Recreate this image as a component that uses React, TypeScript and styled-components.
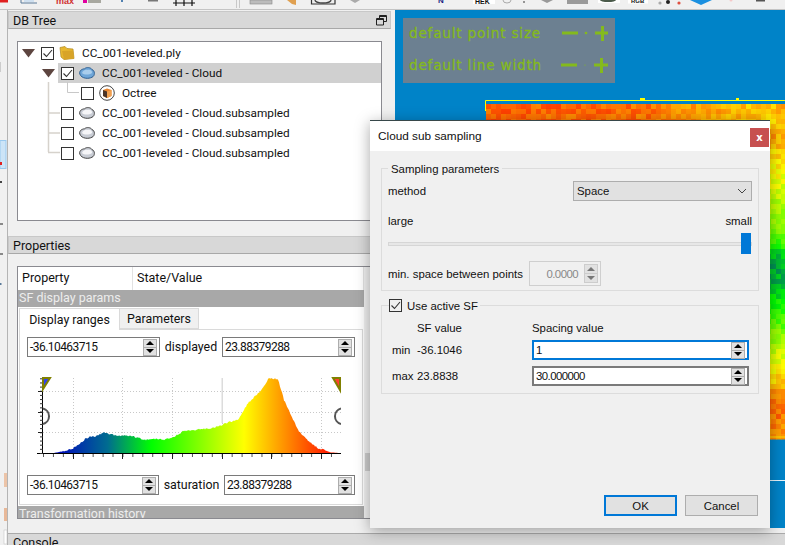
import React from "react";
import styled, { createGlobalStyle } from "styled-components";

const Global = createGlobalStyle`
  html, body { margin: 0; padding: 0; background: #f0f0f0; }
  #root { width: 785px; height: 545px; }
  * { box-sizing: border-box; }
`;

const Win = styled.div`
  position: relative; width: 785px; height: 545px; overflow: hidden;
  display: flex; flex-direction: column; background: #f0f0f0;
  font-family: Roboto, "Liberation Sans", sans-serif; font-size: 12px; color: #111;
`;
const TopBar = styled.div`height: 10px; flex: none; border-bottom: 1px solid #c4c4c4; overflow: hidden; background: #f0f0f0;`;
const Workspace = styled.div`flex: 1; display: flex; min-height: 0;`;
const LeftBar = styled.div`width: 8px; flex: none; border-right: 1px solid #b4b4b4; overflow: hidden;`;
const Stage = styled.div`flex: 1; display: flex; flex-direction: column; min-width: 0;`;
const UpperRow = styled.div`height: 518px; flex: none; display: flex;`;
const Side = styled.div`width: 387px; flex: none; display: flex; flex-direction: column;`;
const DockTitle = styled.div`
  height: 18px; flex: none; width: 383px; background: #d8d8d8; border: 1px solid #c8c8c8; border-bottom-color: #a8a8a8;
  display: flex; align-items: center; justify-content: space-between; padding: 0 3px 0 4px; font-size: 12.5px;
`;
const FirstDock = styled(DockTitle)`margin-top: 1px;`;
const PropsDock = styled(DockTitle)`margin-top: 15px;`;
const Tree = styled.div`
  position: relative; width: 365px; height: 180px; margin: 12px 0 0 9px; background: #fff;
  border: 1px solid #8a8a90; padding-top: 1px; flex: none;
`;
const Lines = styled.svg`position: absolute; left: 0; top: 0; pointer-events: none;`;
const TreeRowWrap = styled.div`display: flex; height: 20px;`;
const Branch = styled.div<{ $depth: number }>`
  width: ${p => 20 + p.$depth * 20}px; flex: none; display: flex; align-items: center;
  padding-left: ${p => 4 + p.$depth * 20}px;
`;
const Cell = styled.div<{ $sel?: boolean }>`
  flex: 1; display: flex; align-items: center; padding-left: 3px; background: ${p => (p.$sel ? "#d0d0d0" : "transparent")};
`;
const Check = styled.span`
  width: 13px; height: 13px; flex: none; border: 1px solid #333; background: #fff; display: inline-flex; align-items: center; justify-content: center;
`;
const CheckD = styled(Check)`background: transparent;`;
const NodeIcon = styled.svg`margin: 0 7px 0 5px; flex: none;`;
const NodeText = styled.span`white-space: nowrap; font-size: 11.8px; line-height: 18px;`;

const PropsBox = styled.div`
  width: 365px; height: 253px; margin: 12px 0 0 9px; flex: none; display: flex; background: #fff;
  border: 1px solid #8a8a90; overflow: hidden;
`;
const PropsInner = styled.div`width: 346px; flex: none; display: flex; flex-direction: column; overflow: hidden;`;
const PropsScroll = styled.div`flex: 1; background: #f0f0f0; position: relative;`;
const Thumb = styled.div`position: absolute; left: 1px; right: 0; top: 186px; height: 18px; background: #cdcdcd;`;
const PropsHead = styled.div`height: 23px; flex: none; display: flex; background: #fff; font-size: 12.5px;`;
const HeadCell = styled.div<{ $w: number }>`
  width: ${p => p.$w}px; flex: none; padding: 2px 0 0 4px; border-right: 1px solid #e2e2e2; line-height: 18px;
`;
const Band = styled.div`
  height: 17px; flex: none; background: #a8a8a8; color: #ededed; font-size: 12.5px; line-height: 16px; padding-left: 1px; white-space: nowrap; overflow: hidden;
`;
const LastBand = styled(Band)`height: 12px; line-height: 16px; margin-top: 1px;`;
const Tabs = styled.div`display: flex; height: 22px; flex: none; background: #fff; align-items: flex-end; padding-left: 1px;`;
const Tab = styled.div<{ $on?: boolean }>`
  height: ${p => (p.$on ? 22 : 21)}px; width: ${p => (p.$on ? 101 : 79)}px; margin-bottom: ${p => (p.$on ? -1 : 0)}px; z-index: ${p => (p.$on ? 1 : 0)};
  background: ${p => (p.$on ? "#fff" : "#f0f0f0")}; border: 1px solid #dadada; border-bottom: ${p => (p.$on ? "none" : "1px solid #dadada")};
  border-left-width: ${p => (p.$on ? 1 : 0)}px; display: flex; align-items: center; justify-content: center; font-size: 12.4px;
`;
const Pane = styled.div`
  height: 176px; flex: none; margin-left: 1px; width: 344px; background: #fff; border: 1px solid #dadada;
  padding: 7px 7px 9px; display: flex; flex-direction: column;
`;
const RangeRow = styled.div`display: flex; align-items: center; justify-content: space-between; height: 20px; flex: none;`;
const RangeLabel = styled.span`font-size: 12.4px; white-space: nowrap; padding-bottom: 1px;`;
const Hist = styled.svg`display: block; margin: 16px 0 12px 6px; flex: none;`;

const SpinBox = styled.div<{ $w: number; $h?: number; $c?: string; $bw?: number; $off?: boolean }>`
  width: ${p => p.$w}px; height: ${p => p.$h || 20}px; flex: none; display: flex; align-items: center; justify-content: space-between;
  border: ${p => p.$bw || 1}px solid ${p => p.$c || "#7a7a7a"}; background: ${p => (p.$off ? "transparent" : "#fff")};
  padding: 0 2px; color: ${p => (p.$off ? "#888" : "#111")};
`;
const SpinText = styled.span<{ $right?: boolean }>`
  flex: 1; text-align: ${p => (p.$right ? "right" : "left")}; padding-right: ${p => (p.$right ? 6 : 0)}px; white-space: nowrap; letter-spacing: -.55px;
`;
const SpinBtns = styled.div`width: 14px; flex: none; display: flex; flex-direction: column;`;
const SpinBtn = styled.div<{ $off?: boolean; $h: number }>`
  height: ${p => p.$h}px; background: #e1e1e1; border: 1px solid ${p => (p.$off ? "#ccc" : "#adadad")}; display: flex; align-items: center; justify-content: center;
  & + & { margin-top: -1px; }
`;

const Viewport = styled.div`flex: 1; position: relative; background: #0083c8; overflow: hidden;`;
const CloudArt = styled.svg`position: absolute; left: 0; top: 0;`;
const Overlay = styled.div`
  position: absolute; left: 8px; top: 8px; width: 212px; height: 65px; background: #6c8091; padding: 0 0 0 6px;
  display: flex; flex-direction: column; color: #84ba1c;
  font-family: "DejaVu Sans", sans-serif; font-size: 13.5px; letter-spacing: .85px; -webkit-text-stroke: .3px #84ba1c;
`;
const OverlayRow = styled.div`height: 32px; display: flex; align-items: center; white-space: nowrap; position: relative; top: -1px;`;
const OverlayText = styled.span`width: 149px; flex: none;`;

const Dialog = styled.div`
  position: absolute; left: 370px; top: 120px; width: 400px; height: 408px; background: #f0f0f0; display: flex; flex-direction: column;
  border-top: 1px solid #37474a; box-shadow: 0 3px 14px rgba(0, 0, 0, .35);
  font-family: "Liberation Sans", Arial, sans-serif; font-size: 11.4px; color: #111;
`;
const DlgTitle = styled.div`height: 30px; flex: none; background: #fff; display: flex; align-items: center; justify-content: space-between; padding: 0 1px 0 8px; font-size: 11.8px;`;
const CloseBtn = styled.div`
  width: 19px; height: 19px; background: #c75050; color: #fff; display: flex; align-items: center; justify-content: center;
  font-family: "DejaVu Sans", sans-serif; font-weight: 700; font-size: 10px; margin-top: 2px;
`;
const Group = styled.div`position: relative; width: 378px; margin-left: 11px; border: 1px solid #dcdcdc; flex: none;`;
const Group1 = styled(Group)`margin-top: 17px; padding: 12px 6px 4px;`;
const Group2 = styled(Group)`
  margin-top: 14px; padding: 14px 0 7px 10px; display: grid; grid-template-columns: 25px 115px 217px; row-gap: 6px; align-items: center;
`;
const ColHead = styled.span`height: 14px; line-height: 16px;`;
const Legend = styled.div`position: absolute; left: 6px; top: -8px; height: 15px; background: #f0f0f0; padding: 0 3px; display: flex; align-items: center; gap: 5px; white-space: nowrap;`;
const LegendChk = styled(Legend)`left: 7px; padding: 0 2px 0 0;`;
const FormRow = styled.div`display: flex; align-items: center; justify-content: space-between;`;
const ComboRow = styled(FormRow)`height: 20px;`;
const Combo = styled.div`
  width: 179px; height: 20px; background: #e1e1e1; border: 1px solid #adadad; display: flex; align-items: center; justify-content: space-between; padding: 0 4px 0 3px;
`;
const EndsRow = styled(FormRow)`height: 14px; margin-top: 13px;`;
const Slider = styled.div`position: relative; height: 21px; margin-top: 5px; display: flex; align-items: center;`;
const Track = styled.div`width: 100%; height: 4px; background: #e7e7e7; border: 1px solid #d6d6d6;`;
const Knob = styled.div`position: absolute; right: 1px; top: 0; width: 10px; height: 21px; background: #0078d7;`;
const MinRow = styled.div`display: flex; align-items: center; height: 25px; margin-top: 7px; gap: 7px;`;
const MinLabel = styled.span`width: 134px; flex: none; white-space: nowrap;`;
const Footer = styled.div`margin-top: auto; padding: 0 12px 12px 0; display: flex; justify-content: flex-end; gap: 8px;`;
const Btn = styled.div<{ $def?: boolean }>`
  width: 73px; height: 21px; background: #e1e1e1; border: ${p => (p.$def ? "2px solid #0078d7" : "1px solid #adadad")};
  display: flex; align-items: center; justify-content: center;
`;
const ConsoleTitle = styled.div`
  margin-top: 5px; flex: 1; background: #d8d8d8; border-top: 1px solid #aaa; padding: 0 0 0 5px; font-size: 12.5px; line-height: 18px; overflow: hidden;
`;

const Tick = () => (
  <svg width="11" height="11" viewBox="0 0 11 11"><path d="M1.5 5.5 L4.5 8.5 L10 2" fill="none" stroke="#333" strokeWidth="1.1" /></svg>
);
const Tri = () => (
  <svg width="14" height="9" viewBox="0 0 14 9"><path d="M0 0 H13 L6.5 8.5Z" fill="#5d4540" /></svg>
);
const FolderIcon = () => (
  <NodeIcon width="16" height="14" viewBox="0 0 16 14">
    <path d="M1 1.5 L6 .5 L8 2.5 L14 3 L15 12.5 L5 13.5 L2 11Z" fill="#e8b830" stroke="#b08820" strokeWidth=".7" />
    <path d="M3 5 L14 4.5 L15 12.5 L5 13.5Z" fill="#d8a428" />
  </NodeIcon>
);
const CloudIcon = ({ on }: { on?: boolean }) => (
  <NodeIcon width="16" height="12" viewBox="0 0 16 12">
    <path d="M.8 7 C0 3.5 3 2 5.5 1.8 C7.5 -.2 12 .4 13 2.6 C16.2 3.6 16.2 9 13 10.2 C10 12 2.5 12 .8 7Z" fill={on ? "#6fa6d8" : "#c8ccd4"} stroke={on ? "#2f5f90" : "#444"} strokeWidth="1" />
    <path d="M3 6 C4 3 7 2.5 8.5 3 C11 2 13.5 4 13 6 C10 8 5 8 3 6Z" fill={on ? "#a9cdec" : "#f6f6f8"} />
  </NodeIcon>
);
const OctIcon = () => (
  <NodeIcon width="16" height="16" viewBox="0 0 16 16">
    <circle cx="8" cy="8" r="7.3" fill="#fff" stroke="#444" strokeWidth="1" />
    <path d="M4 5 L8 3.5 L12.5 5 V11 L8 13 L4 11Z" fill="#e8842c" />
    <path d="M4 5 L8 6.5 V13 L4 11Z" fill="#4a3428" />
    <path d="M8 6.5 L12.5 5 V11 L8 13Z" fill="#f0a050" />
  </NodeIcon>
);

const TreeRow = ({ depth, tri, checked, sel, icon, label }: { depth: number; tri?: boolean; checked?: boolean; sel?: boolean; icon: React.ReactNode; label: string }) => (
  <TreeRowWrap>
    <Branch $depth={depth}>{tri && <Tri />}</Branch>
    <Cell $sel={sel}>
      <Check>{checked && <Tick />}</Check>
      {icon}
      <NodeText>{label}</NodeText>
    </Cell>
  </TreeRowWrap>
);

const Spin = ({ w, h, text, c, bw, off, right }: { w: number; h?: number; text: string; c?: string; bw?: number; off?: boolean; right?: boolean }) => {
  const bh = off ? 10 : 9;
  const col = off ? "#777" : "#000";
  return (
    <SpinBox $w={w} $h={h} $c={c} $bw={bw} $off={off}>
      <SpinText $right={right}>{text}</SpinText>
      <SpinBtns>
        <SpinBtn $h={bh} $off={off}><svg width="8" height="4"><path d="M0 4H8L4 0Z" fill={col} /></svg></SpinBtn>
        <SpinBtn $h={bh} $off={off}><svg width="8" height="4"><path d="M0 0H8L4 4Z" fill={col} /></svg></SpinBtn>
      </SpinBtns>
    </SpinBox>
  );
};

const lerpStops = (v: number) => {
  const s: [number, number, number, number][] = [
    [0, 0, 0, 200], [0.25, 0, 128, 96], [0.4, 0, 255, 0], [0.7, 255, 255, 0], [1, 255, 0, 0],
  ];
  const t = Math.max(0, Math.min(1, v));
  for (let i = 1; i < s.length; i++) {
    if (t <= s[i][0]) {
      const a = s[i - 1], b = s[i], f = (t - a[0]) / (b[0] - a[0]);
      return `rgb(${Math.round(a[1] + (b[1] - a[1]) * f)},${Math.round(a[2] + (b[2] - a[2]) * f)},${Math.round(a[3] + (b[3] - a[3]) * f)})`;
    }
  }
  return "#f00";
};
const rnd = (n: number) => { const x = Math.sin(n * 127.1 + 311.7) * 43758.5453; return x - Math.floor(x); };
const interp = (pts: number[][], x: number) => {
  if (x <= pts[0][0]) return pts[0][1];
  for (let i = 1; i < pts.length; i++) {
    if (x <= pts[i][0]) {
      const f = (x - pts[i - 1][0]) / (pts[i][0] - pts[i - 1][0]);
      return pts[i - 1][1] + (pts[i][1] - pts[i - 1][1]) * f;
    }
  }
  return pts[pts.length - 1][1];
};

const CloudDrawing = () => {
  const cells: React.ReactNode[] = [];
  const top = [[485, .89], [640, .87], [690, .82], [740, .78], [770, .76], [785, .8]];
  const right = [[128, .82], [160, .72], [200, .62], [235, .52], [258, .3], [285, .33], [310, .45], [345, .62], [375, .74], [405, .88], [437, .82]];
  const S = 5;
  for (let y = 104; y < 437; y += S) {
    for (let x = 486; x < 785; x += S) {
      if (x + S <= 770 && y >= 120) continue;
      const base = y < 128 ? interp(top, x) : interp(right, y);
      const v = base + (rnd(x * 13 + y * 7) - .5) * .09;
      cells.push(<rect key={`${x}-${y}`} x={x - 395} y={y - 10} width={S + .5} height={S + .5} fill={lerpStops(v)} />);
    }
  }
  return (
    <CloudArt width="390" height="518" viewBox="0 0 390 518">
      <path d="M90.5 101 V90.5 H390" fill="none" stroke="#ffff00" />
      <rect x="245" y="88" width="5" height="3" fill="#ffff00" />
      <rect x="341" y="88" width="3" height="3" fill="#ffff00" />
      {cells}
      <rect x="375" y="426.5" width="15" height="1" fill="#ffe000" />
      <rect x="375" y="470" width="15" height="1" fill="#e8f4fa" />
    </CloudArt>
  );
};

const histPts = [[53, 453], [63, 451], [73, 448], [83, 440], [88, 437], [95, 436], [103, 432.5], [108, 434], [117, 436], [130, 435.5], [143, 440], [155, 439], [163, 440], [173, 437], [183, 431], [200, 429], [213, 428], [228, 422], [237, 420], [247, 403], [260, 391], [268, 378], [277, 379], [283, 400], [297, 430], [307, 441], [317, 448], [330, 452.5], [340, 453]];

const Histogram = () => {
  const ox = 32, oy = 373;
  let d = `M${53 - ox} 80`;
  for (let x = 53; x <= 340; x++) {
    const n = x < 60 || x > 325 ? 0 : (rnd(x) - .5) * 1.6;
    d += ` L${x - ox} ${Math.min(80, interp(histPts, x) - oy + n).toFixed(1)}`;
  }
  d += ` L${340 - ox} 80Z`;
  const majors = [72, 121, 171, 221, 270, 320];
  const grid = [391, 412, 432];
  const minors: number[] = [];
  for (let x = 42; x < 336; x += 9.93) minors.push(x);
  const lefts: number[] = [];
  for (let y = 453; y > 378; y -= 4.15) lefts.push(y);
  return (
    <Hist width="308" height="90" viewBox="0 0 308 90">
      <defs>
        <linearGradient id="hg" gradientUnits="userSpaceOnUse" x1={20} x2={293} y1="0" y2="0">
          <stop offset="0" stopColor="#0000c0" />
          <stop offset=".2" stopColor="#006c90" />
          <stop offset=".36" stopColor="#00ff00" />
          <stop offset=".7" stopColor="#ffff00" />
          <stop offset="1" stopColor="#ff2000" />
        </linearGradient>
      </defs>
      {majors.map(x => <path key={x} d={`M${x - ox + .5} 5V80`} stroke="#c8c8c8" strokeDasharray="1 2" />)}
      {grid.map(y => <path key={y} d={`M10 ${y - oy + .5}H308`} stroke="#c8c8c8" strokeDasharray="1 2" />)}
      <rect x="188.5" y="5" width="1.5" height="45" fill="#dcdcdc" />
      <path d={d} fill="url(#hg)" />
      <path d="M4 80.5H308" stroke="#000" />
      <path d="M9.5 5V81" stroke="#000" />
      {minors.map(x => <path key={x} d={`M${x - ox + .5} 81V84`} stroke="#555" />)}
      {majors.map(x => <path key={x} d={`M${x - ox + .5} 81V86`} stroke="#222" />)}
      {lefts.map(y => <path key={y} d={`M7 ${y - oy + .5}H10`} stroke="#333" />)}
      {grid.map(y => <path key={y} d={`M5 ${y - oy + .5}H10`} stroke="#222" />)}
      <path d="M10 16V5H17Z" fill="#3344ee" stroke="#808000" strokeWidth="2" />
      <path d="M300 5H307V17Z" fill="#ff4030" stroke="#808000" strokeWidth="2" />
      <path d="M10 35.5 A8 8 0 0 1 10 51" fill="none" stroke="#555" strokeWidth="2" />
      <path d="M308 35.5 A8 8 0 0 0 308 51" fill="none" stroke="#555" strokeWidth="2" />
    </Hist>
  );
};

const ToolIcons = () => (
  <svg width="785" height="9" viewBox="0 0 785 9" style={{ display: "block" }}>
    <rect x="0" y="0" width="8" height="2.5" fill="#e02020" />
    <path d="M21 0V3H37" fill="none" stroke="#5a7a9a" /><rect x="24" y="0" width="10" height="2" fill="#cfe0f0" />
    <text x="56" y="4" fontFamily="Liberation Sans" fontWeight="700" fontSize="9" fill="#d03030">max</text>
    <rect x="83" y="0" width="4" height="3" fill="#e000a0" /><rect x="88" y="0" width="13" height="3" fill="#a8a8a0" />
    <rect x="121" y="0" width="2" height="2" fill="#5080b0" />
    <rect x="148" y="0" width="10" height="1.5" fill="#777" />
    <path d="M173 3H195M176 0V6M184 0V6M192 0V6" stroke="#111" strokeWidth="1.2" fill="none" />
    <path d="M236.5 0V8M239.5 0V8" stroke="#c8c8c8" />
    <rect x="250" y="0" width="22" height="4" fill="#bcbcbc" stroke="#888" strokeWidth=".6" />
    <path d="M287 0H296V5L292 4Z" fill="#e0a050" />
    <path d="M311.5 0V4H335V0" fill="#eee" stroke="#333" strokeWidth="1.2" />
    <ellipse cx="323" cy="0" rx="8" ry="3" fill="none" stroke="#444" strokeWidth="1.3" />
    <path d="M350 0H360L355 3Z" fill="#aaa" />
    <text x="438" y="3" fontFamily="Liberation Sans" fontWeight="700" fontSize="8" fill="#1a1a80">N</text>
    <rect x="473" y="0" width="22" height="4" fill="#fff" />
    <text x="475" y="3.5" fontFamily="Liberation Sans" fontWeight="700" fontSize="7" fill="#111">HEK</text>
    <path d="M503 0A4 3 0 0 0 511 0" stroke="#aaa" fill="none" /><circle cx="524" cy="2" r="1" fill="#777" />
    <path d="M541 0H553L547 3Z" fill="#999" />
    <rect x="567" y="0" width="21" height="4" fill="#9a9a9a" />
    <rect x="598" y="0" width="22" height="3" fill="#fff" /><ellipse cx="608" cy="0" rx="8" ry="2" fill="#4a5a4a" />
    <rect x="628" y="0" width="20" height="3.5" fill="#fff" />
    <text x="631" y="3" fontFamily="Liberation Sans" fontWeight="700" fontSize="6" fill="#111">RGB</text>
    <circle cx="660" cy="3" r="1.6" fill="#aaa" /><circle cx="668" cy="2" r="2" fill="#222" /><circle cx="679" cy="3" r="1.6" fill="#e05040" />
    <path d="M690 0H712L701 5Z" fill="#1a90e0" />
    <circle cx="731" cy="0" r="1.5" fill="#f4c8c8" />
    <rect x="756" y="0" width="9" height="1.5" fill="#555" />
  </svg>
);

const ToolStrip = () => (
  <svg width="7" height="535" viewBox="0 10 7 535" style={{ display: "block" }}>
    <rect x="0" y="140.5" width="6" height="28" fill="#cce4f7" stroke="#99c9ef" />
    <rect x="0" y="162" width="2" height="3" fill="#e02020" />
    <rect x="0" y="62" width="1" height="10" fill="#ccc" />
    <rect x="0" y="181" width="2" height="2" fill="#444" />
    <path d="M0 224H3M0 254H3" stroke="#222" />
    <rect x="0" y="283" width="1.5" height="2" fill="#5a7a9a" />
    <rect x="4" y="473" width="3" height="14" fill="#ecc4a8" />
    <rect x="4" y="508" width="3" height="13" fill="#e8b898" />
    <rect x="4" y="530" width="3" height="14" fill="#fff" stroke="#bbb" strokeWidth=".5" />
  </svg>
);

export default function App() {
  return (
    <Win>
      <Global />
      <TopBar><ToolIcons /></TopBar>
      <Workspace>
        <LeftBar><ToolStrip /></LeftBar>
        <Stage>
          <UpperRow>
            <Side>
              <FirstDock>
                <span>DB Tree</span>
                <svg width="11" height="11" viewBox="0 0 11 11"><path d="M3.5 3V.5H10.5V6.5H7.5M.5 3.5H7.5V10H.5Z" fill="none" stroke="#222" /><path d="M3.5 1.5H10.5M.5 4.5H7.5" stroke="#222" /></svg>
              </FirstDock>
              <Tree>
                <Lines width="120" height="130">
                  <path d="M30.5 40V110M30 71H42M30 91H42M30 110.5H42" stroke="#d6d2cc" strokeWidth="1.5" fill="none" />
                  <path d="M49.5 40V50.5H61" stroke="#c8c8c8" fill="none" />
                </Lines>
                <TreeRow depth={0} tri checked icon={<FolderIcon />} label="CC_001-leveled.ply" />
                <TreeRow depth={1} tri checked sel icon={<CloudIcon on />} label="CC_001-leveled - Cloud" />
                <TreeRow depth={2} icon={<OctIcon />} label="Octree" />
                <TreeRow depth={1} icon={<CloudIcon />} label="CC_001-leveled - Cloud.subsampled" />
                <TreeRow depth={1} icon={<CloudIcon />} label="CC_001-leveled - Cloud.subsampled" />
                <TreeRow depth={1} icon={<CloudIcon />} label="CC_001-leveled - Cloud.subsampled" />
              </Tree>
              <PropsDock><span>Properties</span></PropsDock>
              <PropsBox>
                <PropsInner>
                  <PropsHead>
                    <HeadCell $w={115}>Property</HeadCell>
                    <HeadCell $w={231}>State/Value</HeadCell>
                  </PropsHead>
                  <Band>SF display params</Band>
                  <Tabs>
                    <Tab $on>Display ranges</Tab>
                    <Tab>Parameters</Tab>
                  </Tabs>
                  <Pane>
                    <RangeRow>
                      <Spin w={133} text="-36.10463715" />
                      <RangeLabel>displayed</RangeLabel>
                      <Spin w={133} text="23.88379288" />
                    </RangeRow>
                    <Histogram />
                    <RangeRow>
                      <Spin w={132} text="-36.10463715" />
                      <RangeLabel>saturation</RangeLabel>
                      <Spin w={131} text="23.88379288" />
                    </RangeRow>
                  </Pane>
                  <LastBand>Transformation history</LastBand>
                </PropsInner>
                <PropsScroll><Thumb /></PropsScroll>
              </PropsBox>
            </Side>
            <Viewport>
              <CloudDrawing />
              <Overlay>
                <OverlayRow>
                  <OverlayText>default point size</OverlayText>
                  <svg width="50" height="18" viewBox="0 0 50 18"><path d="M4 9H20" stroke="#84ba1c" strokeWidth="3" /><circle cx="28" cy="9" r="1.3" fill="#84ba1c" /><path d="M37 9H52M44.5 2V17" stroke="#84ba1c" strokeWidth="3" /></svg>
                </OverlayRow>
                <OverlayRow>
                  <OverlayText>default line width</OverlayText>
                  <svg width="50" height="18" viewBox="0 0 50 18"><path d="M3 9H19" stroke="#84ba1c" strokeWidth="3" /><circle cx="27" cy="9" r=".6" fill="#84ba1c" /><path d="M36 9H51M43.5 2V17" stroke="#84ba1c" strokeWidth="3" /></svg>
                </OverlayRow>
              </Overlay>
            </Viewport>
          </UpperRow>
          <ConsoleTitle>Console</ConsoleTitle>
        </Stage>
      </Workspace>
      <Dialog>
        <DlgTitle>
          <span>Cloud sub sampling</span>
          <CloseBtn>x</CloseBtn>
        </DlgTitle>
        <Group1>
          <Legend>Sampling parameters</Legend>
          <ComboRow>
            <span>method</span>
            <Combo>
              <span>Space</span>
              <svg width="10" height="6" viewBox="0 0 10 6"><path d="M1 1L5 5L9 1" fill="none" stroke="#444" /></svg>
            </Combo>
          </ComboRow>
          <EndsRow><span>large</span><span>small</span></EndsRow>
          <Slider><Track /><Knob /></Slider>
          <MinRow>
            <MinLabel>min. space between points</MinLabel>
            <Spin w={72} h={25} text="0.0000" c="#cfcfcf" off right />
          </MinRow>
        </Group1>
        <Group2>
          <LegendChk><CheckD><Tick /></CheckD><span>Use active SF</span></LegendChk>
          <ColHead />
          <ColHead>SF value</ColHead>
          <ColHead>Spacing value</ColHead>
          <span>min</span>
          <span>-36.1046</span>
          <Spin w={217} text="1" c="#0078d7" bw={2} />
          <span>max</span>
          <span>23.8838</span>
          <Spin w={217} text="30.000000" c="#7a7a7a" bw={2} />
        </Group2>
        <Footer>
          <Btn $def>OK</Btn>
          <Btn>Cancel</Btn>
        </Footer>
      </Dialog>
    </Win>
  );
}
